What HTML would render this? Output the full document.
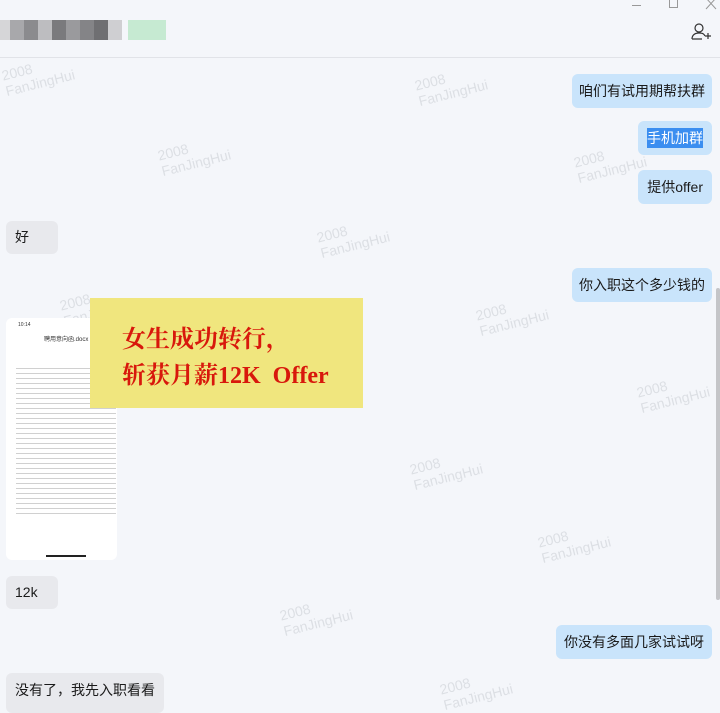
<!DOCTYPE html>
<html><head><meta charset="utf-8"><style>
*{margin:0;padding:0;box-sizing:border-box}
body{width:720px;height:696px;background:#f4f6fa;position:relative;overflow:hidden;font-family:"Liberation Sans","Noto Sans CJK SC",sans-serif;font-size:14px;color:#1a1a1a}
.b{position:absolute;height:34px;line-height:34px;border-radius:6px;padding:0 9px;white-space:nowrap}
.r{background:#c9e4fb}
.l{background:#e8e9ed}
.wm{position:absolute;color:#dcdfe4;font-size:14px;line-height:16px;transform:rotate(-14deg);transform-origin:left top}
.px{position:absolute;top:20px;height:20px;width:14px}
</style></head><body>
<!-- header -->
<div class="px" style="left:0;width:10px;background:#d6d6d8"></div>
<div class="px" style="left:10px;background:#a8a8ab"></div>
<div class="px" style="left:24px;background:#8b8b8e"></div>
<div class="px" style="left:38px;background:#bdbdc0"></div>
<div class="px" style="left:52px;background:#7a7a7d"></div>
<div class="px" style="left:66px;background:#9a9a9d"></div>
<div class="px" style="left:80px;background:#848487"></div>
<div class="px" style="left:94px;background:#6f6f72"></div>
<div class="px" style="left:108px;background:#cfcfd2"></div>
<div class="px" style="left:128px;width:38px;background:#c6ead2"></div>
<div style="position:absolute;left:0;top:57px;width:720px;height:1px;background:#e1e3e8"></div>
<div style="position:absolute;left:632px;top:5px;width:9px;height:1px;background:#999"></div>
<div style="position:absolute;left:669px;top:0;width:9px;height:8px;border:1px solid #999;border-top:none"></div>
<svg style="position:absolute;left:704px;top:0" width="14" height="10"><path d="M2 -2L12 9M12 -2L2 9" stroke="#999" stroke-width="1" fill="none"/></svg>
<svg style="position:absolute;left:690px;top:22px" width="22" height="20"><circle cx="9" cy="6" r="4" stroke="#333" stroke-width="1.2" fill="none"/><path d="M2 17c0-4 3-6 7-6s5 1 6 3M2 17h10M15 14h6M18 11v6" stroke="#333" stroke-width="1.2" fill="none"/></svg>
<!-- watermarks -->
<div class="wm" style="left:0;top:68px">2008<br>FanJingHui</div>
<div class="wm" style="left:413px;top:78px">2008<br>FanJingHui</div>
<div class="wm" style="left:156px;top:148px">2008<br>FanJingHui</div>
<div class="wm" style="left:572px;top:155px">2008<br>FanJingHui</div>
<div class="wm" style="left:315px;top:230px">2008<br>FanJingHui</div>
<div class="wm" style="left:58px;top:298px">2008<br>FanJingHui</div>
<div class="wm" style="left:474px;top:308px">2008<br>FanJingHui</div>
<div class="wm" style="left:635px;top:385px">2008<br>FanJingHui</div>
<div class="wm" style="left:408px;top:462px">2008<br>FanJingHui</div>
<div class="wm" style="left:536px;top:535px">2008<br>FanJingHui</div>
<div class="wm" style="left:278px;top:608px">2008<br>FanJingHui</div>
<div class="wm" style="left:438px;top:682px">2008<br>FanJingHui</div>
<!-- messages -->
<div class="b r" style="right:8px;top:74px;padding:0 7px">咱们有试用期帮扶群</div>
<div class="b r" style="right:8px;top:121px;padding:0 9px"><span style="background:#3b8ef0;color:#fff;line-height:20px;display:inline-block">手机加群</span></div>
<div class="b r" style="right:8px;top:170px">提供offer</div>
<div class="b l" style="left:6px;top:221px;width:52px;height:33px;line-height:33px">好</div>
<div class="b r" style="right:8px;top:268px;padding:0 7px">你入职这个多少钱的</div>
<!-- image -->
<div style="position:absolute;left:6px;top:318px;width:111px;height:242px;background:#fff;border-radius:6px;overflow:hidden">
<div style="position:absolute;left:12px;top:4px;font-size:5px;color:#333">10:14</div>
<div style="position:absolute;left:38px;top:16px;font-size:6px;color:#333">聘用意向函.docx</div>
<div style="position:absolute;left:10px;top:48px;width:100px;height:150px;background:repeating-linear-gradient(#fff 0 2px,#d0d0d0 2px 3px,#fff 3px 5px)"></div>
<div style="position:absolute;left:40px;top:237px;width:40px;height:2px;background:#222"></div>
</div>
<div style="position:absolute;left:90px;top:298px;width:273px;height:110px;background:#f0e67e"></div>
<div style="position:absolute;left:122px;top:322px;color:#d8180c;font-weight:bold;font-size:24px;line-height:36px;font-family:'Liberation Serif','Noto Serif CJK SC',serif">女生成功转行，<br>斩获月薪12K&nbsp;&nbsp;Offer</div>
<div class="b l" style="left:6px;top:576px;width:52px;height:33px;line-height:33px">12k</div>
<div class="b r" style="right:8px;top:625px;padding:0 8px">你没有多面几家试试呀</div>
<div class="b l" style="left:6px;top:673px;height:40px">没有了，我先入职看看</div>
<div style="position:absolute;left:716px;top:288px;width:4px;height:312px;background:#c4c5c8;border-radius:2px"></div>
</body></html>
